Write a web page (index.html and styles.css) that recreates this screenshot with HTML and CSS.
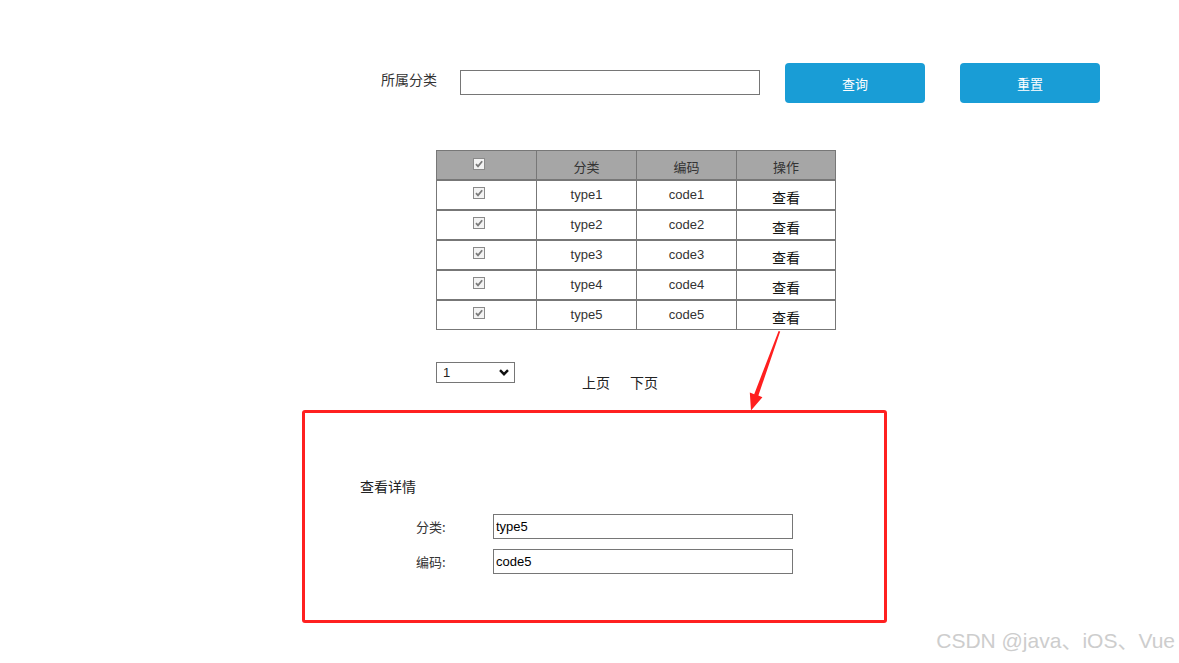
FILE: index.html
```html
<!DOCTYPE html>
<html lang="zh-CN">
<head>
<meta charset="utf-8">
<title>分类查询</title>
<link rel="stylesheet" href="styles.css">
</head>
<body>
<div class="page">
  <div class="search-row">
    <span class="search-label">所属分类</span>
    <input class="search-input" type="text">
    <button class="btn btn-query">查询</button>
    <button class="btn btn-reset">重置</button>
  </div>

  <div class="grid-table">
    <div class="row head">
      <div class="cell"><span class="cb"><svg viewBox="0 0 12 12" width="12" height="12"><rect x="0.5" y="0.5" width="11" height="11" fill="#f3f3f3" stroke="#8a8a8a"/><path d="M3 6.2 L5 8.4 L9.2 3.2" fill="none" stroke="#7a7a7a" stroke-width="1.8"/></svg></span></div>
      <div class="cell">分类</div>
      <div class="cell">编码</div>
      <div class="cell">操作</div>
    </div>
    <div class="row">
      <div class="cell"><span class="cb"><svg viewBox="0 0 12 12" width="12" height="12"><rect x="0.5" y="0.5" width="11" height="11" fill="#f3f3f3" stroke="#8a8a8a"/><path d="M3 6.2 L5 8.4 L9.2 3.2" fill="none" stroke="#7a7a7a" stroke-width="1.8"/></svg></span></div>
      <div class="cell">type1</div>
      <div class="cell">code1</div>
      <div class="cell op">查看</div>
    </div>
    <div class="row">
      <div class="cell"><span class="cb"><svg viewBox="0 0 12 12" width="12" height="12"><rect x="0.5" y="0.5" width="11" height="11" fill="#f3f3f3" stroke="#8a8a8a"/><path d="M3 6.2 L5 8.4 L9.2 3.2" fill="none" stroke="#7a7a7a" stroke-width="1.8"/></svg></span></div>
      <div class="cell">type2</div>
      <div class="cell">code2</div>
      <div class="cell op">查看</div>
    </div>
    <div class="row">
      <div class="cell"><span class="cb"><svg viewBox="0 0 12 12" width="12" height="12"><rect x="0.5" y="0.5" width="11" height="11" fill="#f3f3f3" stroke="#8a8a8a"/><path d="M3 6.2 L5 8.4 L9.2 3.2" fill="none" stroke="#7a7a7a" stroke-width="1.8"/></svg></span></div>
      <div class="cell">type3</div>
      <div class="cell">code3</div>
      <div class="cell op">查看</div>
    </div>
    <div class="row">
      <div class="cell"><span class="cb"><svg viewBox="0 0 12 12" width="12" height="12"><rect x="0.5" y="0.5" width="11" height="11" fill="#f3f3f3" stroke="#8a8a8a"/><path d="M3 6.2 L5 8.4 L9.2 3.2" fill="none" stroke="#7a7a7a" stroke-width="1.8"/></svg></span></div>
      <div class="cell">type4</div>
      <div class="cell">code4</div>
      <div class="cell op">查看</div>
    </div>
    <div class="row">
      <div class="cell"><span class="cb"><svg viewBox="0 0 12 12" width="12" height="12"><rect x="0.5" y="0.5" width="11" height="11" fill="#f3f3f3" stroke="#8a8a8a"/><path d="M3 6.2 L5 8.4 L9.2 3.2" fill="none" stroke="#7a7a7a" stroke-width="1.8"/></svg></span></div>
      <div class="cell">type5</div>
      <div class="cell">code5</div>
      <div class="cell op">查看</div>
    </div>
  </div>

  <div class="pager">
    <div class="page-select">
      <span class="page-num">1</span>
      <svg class="chev" viewBox="0 0 10 7" width="10" height="7"><path d="M1 1.2 L5 5.2 L9 1.2" fill="none" stroke="#111" stroke-width="2.4"/></svg>
    </div>
    <span class="pager-link prev">上页</span>
    <span class="pager-link next">下页</span>
  </div>

  <div class="detail-box">
    <div class="detail-title">查看详情</div>
    <div class="form-row">
      <span class="form-label">分类:</span>
      <input class="form-input" type="text" value="type5">
    </div>
    <div class="form-row">
      <span class="form-label">编码:</span>
      <input class="form-input" type="text" value="code5">
    </div>
  </div>
</div>

<svg class="arrow-layer" viewBox="0 0 1179 663" width="1179" height="663">
  <polygon points="778.6,331 780.2,331.4 758.4,395.6 762.4,397.2 751,410.5 749.8,392.6 754.2,394.2" fill="#ff1f1f"/>
</svg>

<div class="watermark">CSDN @java、iOS、Vue</div>
</body>
</html>
```

FILE: styles.css
```css
* {
  box-sizing: border-box;
}

html, body {
  margin: 0;
  padding: 0;
  background: #ffffff;
}

body {
  font-family: "Liberation Sans", "Noto Sans CJK SC", sans-serif;
  color: #333;
  font-size: 13px;
  position: relative;
  width: 1179px;
  height: 663px;
  overflow: hidden;
}

.page {
  padding-top: 63px;
}

/* search row */
.search-row {
  display: flex;
  align-items: flex-start;
  margin-left: 381px;
  height: 40px;
}

.search-label {
  width: 79px;
  font-size: 14px;
  line-height: 20px;
  margin-top: 7px;
  color: #333;
}

.search-input {
  width: 300px;
  height: 25px;
  margin: 7px 0 0 0;
  border: 1px solid #767676;
  padding: 0 3px;
  font-family: inherit;
  font-size: 13px;
  outline: none;
}

.btn {
  width: 140px;
  height: 40px;
  border: none;
  border-radius: 4px;
  background: #199dd6;
  color: #ffffff;
  font-family: "Noto Sans CJK SC", sans-serif;
  font-size: 13px;
  padding: 0;
  margin: 0;
}

.btn-query {
  margin-left: 25px;
}

.btn-reset {
  margin-left: 35px;
}

/* table */
.grid-table {
  margin-top: 47px;
  margin-left: 436px;
  width: 400px;
}

.row {
  display: grid;
  grid-template-columns: 99px 100px 100px 99px;
  height: 30px;
  border: 1px solid #777;
}

.row.head {
  background: #a6a6a6;
}

.cell {
  display: flex;
  align-items: center;
  justify-content: center;
  border-left: 1px solid #777;
  font-size: 13px;
  color: #333;
  padding-bottom: 2px;
}

.cell:first-child {
  border-left: none;
}

.row.head .cell {
  padding-top: 3px;
  padding-bottom: 0;
  color: #333;
}

.cell.op {
  font-size: 14px;
  color: #111;
  padding-top: 3px;
  padding-bottom: 0;
}

.cb {
  display: block;
  width: 12px;
  height: 12px;
  margin-top: -2px;
  margin-left: -16px;
}

.row.head .cb {
  margin-top: -5px;
}

.cb svg {
  display: block;
}

/* pager */
.pager {
  display: flex;
  align-items: flex-start;
  margin-top: 32px;
  margin-left: 436px;
}

.page-select {
  width: 79px;
  height: 21px;
  border: 1px solid #767676;
  display: flex;
  align-items: center;
  justify-content: space-between;
  padding: 0 5px 0 6px;
}

.page-num {
  font-size: 13px;
  color: #222;
}

.chev {
  display: block;
}

.pager-link {
  font-size: 14px;
  line-height: 20px;
  margin-top: 10px;
  color: #222;
  font-family: "Noto Sans CJK SC", sans-serif;
}

.prev {
  margin-left: 67px;
}

.next {
  margin-left: 20px;
}

/* detail box */
.detail-box {
  margin-top: 18px;
  margin-left: 302px;
  width: 585px;
  height: 213px;
  border: 3px solid #ff2020;
  border-radius: 3px;
  padding: 63px 0 0 55px;
}

.detail-title {
  font-size: 14px;
  line-height: 20px;
  color: #222;
  font-family: "Noto Sans CJK SC", sans-serif;
}

.form-row {
  display: flex;
  align-items: center;
  margin-left: 56px;
  margin-top: 18px;
}

.form-row + .form-row {
  margin-top: 10px;
}

.form-label {
  width: 77px;
  font-size: 13px;
  color: #333;
  font-family: "Noto Sans CJK SC", sans-serif;
}

.form-input {
  width: 300px;
  height: 25px;
  border: 1px solid #767676;
  margin: 0;
  padding: 0 2px;
  font-family: "Liberation Sans", sans-serif;
  font-size: 13px;
  color: #000;
  outline: none;
}

/* overlays */
.arrow-layer {
  position: absolute;
  left: 0;
  top: 0;
  pointer-events: none;
}

.watermark {
  position: absolute;
  right: 4px;
  top: 628px;
  font-family: "Liberation Sans", "Noto Sans CJK SC", sans-serif;
  font-size: 21px;
  line-height: 26px;
  color: #cdcdcd;
}
```
